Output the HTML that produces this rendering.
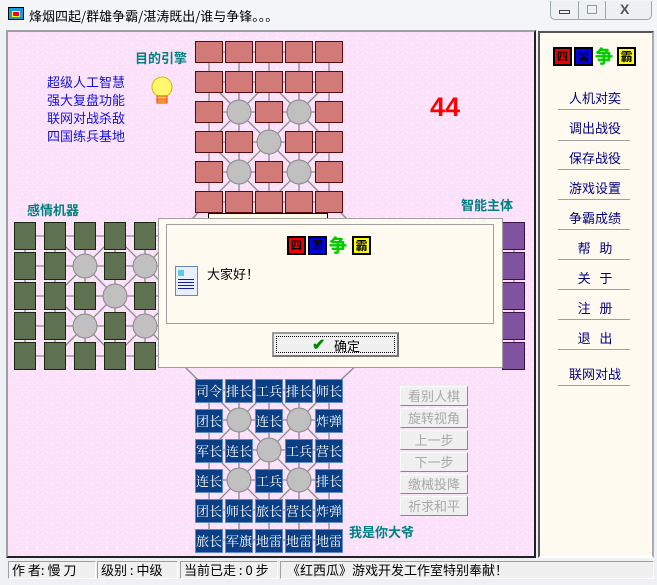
<!DOCTYPE html>
<html><head><meta charset="utf-8"><style>
*{margin:0;padding:0;box-sizing:border-box}
body{width:657px;height:585px;overflow:hidden;background:#eef1f5;font-family:"Liberation Sans","Noto Sans CJK SC",sans-serif;position:relative}
.a{position:absolute}
.cn{font-family:"Noto Sans CJK SC","WenQuanYi Zen Hei",sans-serif}
.rb{color:#000080;font-size:13px;width:112px;text-align:center}
.ln{height:1px;background:#a0a0a0;width:72px;left:558px}
.gb{left:400px;width:68px;height:20px;background:#f0f0f0;border:1px solid #fff;border-right-color:#888;border-bottom-color:#888;color:#a8a8a8;font-size:13px;text-align:center;line-height:18px}
.st{top:561px;height:18px;border:1px solid #a0a0a0;border-right-color:#fff;border-bottom-color:#fff;font-size:13px;line-height:16px;padding-left:3px;color:#000}
</style></head><body>
<div class="a" style="left:0;top:0;width:657px;height:30px;background:#f3f5f8"></div>
<div class="a" style="left:8px;top:7px;width:16px;height:13px;background:#1a9bd6;border:1px solid #000"><div class="a" style="left:3px;top:3px;width:8px;height:6px;background:#e03;border:1px solid #ff0"></div></div>
<div class="a cn" style="left:29px;top:6px;font-size:13px;color:#000">烽烟四起/群雄争霸/湛涛既出/谁与争锋。。。</div>
<div class="a" style="left:550px;top:1px;width:102px;height:19px;border:1px solid #9aa;border-top:none;border-radius:0 0 5px 5px;background:#eef1f4"></div>
<div class="a" style="left:578px;top:1px;width:1px;height:19px;background:#9aa"></div>
<div class="a" style="left:605px;top:1px;width:1px;height:19px;background:#9aa"></div>
<div class="a" style="left:559px;top:10px;width:11px;height:4px;border:1px solid #444"></div>
<div class="a" style="left:587px;top:5px;width:10px;height:9px;border:1px solid #999"></div>
<div class="a" style="left:620px;top:1px;font-size:14px;color:#555;font-weight:bold">X</div>
<div class="a" style="left:6px;top:30px;width:530px;height:528px;border:2px solid #a0a0a0;border-right:2px solid #222;border-bottom:2px solid #222;background:#fbe2fa"></div>
<svg class="a" style="left:0;top:0" width="540" height="560">
<defs><pattern id="p" width="10" height="10" patternUnits="userSpaceOnUse"><rect x="2" y="3" width="1" height="1" fill="#fff"/><rect x="6" y="7" width="2" height="1" fill="#fff"/><rect x="7" y="2" width="1" height="1" fill="#fff"/></pattern></defs>
<rect x="10" y="34" width="524" height="522" fill="url(#p)"/>
<g stroke="#888" stroke-width="1.3" fill="none">
<path d="M209 52V202M239 52V202M269 52V202M299 52V202M329 52V202M209 52H329M209 82H329M209 112H329M209 142H329M209 172H329M209 202H329M209 82L329 202M329 82L209 202M209 142L269 82L329 142L269 202Z"/>
<path d="M208 202L180 232M330 202L360 232"/>
<path d="M209 390V540M239 390V540M269 390V540M299 390V540M329 390V540M209 390H329M209 420H329M209 450H329M209 480H329M209 510H329M209 540H329M209 390L329 510M329 390L209 510M209 450L269 390L329 450L269 510Z"/>
<path d="M208 390L180 362M330 390L360 362"/>
<path d="M25 236H175M25 266H175M25 296H175M25 326H175M25 356H175M25 236V356M55 236V356M85 236V356M115 236V356M145 236V356M55 236L175 356M55 356L175 236M55 296L115 236L175 296L115 356Z"/>
<path d="M514 236V356"/>
</g>
<g fill="#c0c0c0" stroke="#888"><circle cx="239" cy="112" r="12"/><circle cx="299" cy="112" r="12"/><circle cx="269" cy="142" r="12"/><circle cx="239" cy="172" r="12"/><circle cx="299" cy="172" r="12"/>
<circle cx="239" cy="420" r="12"/><circle cx="299" cy="420" r="12"/><circle cx="269" cy="450" r="12"/><circle cx="239" cy="480" r="12"/><circle cx="299" cy="480" r="12"/>
<circle cx="85" cy="266" r="12"/><circle cx="145" cy="266" r="12"/><circle cx="115" cy="296" r="12"/><circle cx="85" cy="326" r="12"/><circle cx="145" cy="326" r="12"/></g>
<g fill="#d27a78" stroke="#5a0a0a">
<rect x="195.5" y="41.5" width="27" height="21"/><rect x="225.5" y="41.5" width="27" height="21"/><rect x="255.5" y="41.5" width="27" height="21"/><rect x="285.5" y="41.5" width="27" height="21"/><rect x="315.5" y="41.5" width="27" height="21"/>
<rect x="195.5" y="71.5" width="27" height="21"/><rect x="225.5" y="71.5" width="27" height="21"/><rect x="255.5" y="71.5" width="27" height="21"/><rect x="285.5" y="71.5" width="27" height="21"/><rect x="315.5" y="71.5" width="27" height="21"/>
<rect x="195.5" y="101.5" width="27" height="21"/><rect x="255.5" y="101.5" width="27" height="21"/><rect x="315.5" y="101.5" width="27" height="21"/>
<rect x="195.5" y="131.5" width="27" height="21"/><rect x="225.5" y="131.5" width="27" height="21"/><rect x="285.5" y="131.5" width="27" height="21"/><rect x="315.5" y="131.5" width="27" height="21"/>
<rect x="195.5" y="161.5" width="27" height="21"/><rect x="255.5" y="161.5" width="27" height="21"/><rect x="315.5" y="161.5" width="27" height="21"/>
<rect x="195.5" y="191.5" width="27" height="21"/><rect x="225.5" y="191.5" width="27" height="21"/><rect x="255.5" y="191.5" width="27" height="21"/><rect x="285.5" y="191.5" width="27" height="21"/><rect x="315.5" y="191.5" width="27" height="21"/>
</g>
<g fill="#5e7150" stroke="#1a2a10">
<rect x="14.5" y="222.5" width="21" height="27"/><rect x="44.5" y="222.5" width="21" height="27"/><rect x="74.5" y="222.5" width="21" height="27"/><rect x="104.5" y="222.5" width="21" height="27"/><rect x="134.5" y="222.5" width="21" height="27"/>
<rect x="14.5" y="252.5" width="21" height="27"/><rect x="44.5" y="252.5" width="21" height="27"/><rect x="104.5" y="252.5" width="21" height="27"/>
<rect x="14.5" y="282.5" width="21" height="27"/><rect x="44.5" y="282.5" width="21" height="27"/><rect x="74.5" y="282.5" width="21" height="27"/><rect x="134.5" y="282.5" width="21" height="27"/>
<rect x="14.5" y="312.5" width="21" height="27"/><rect x="44.5" y="312.5" width="21" height="27"/><rect x="104.5" y="312.5" width="21" height="27"/>
<rect x="14.5" y="342.5" width="21" height="27"/><rect x="44.5" y="342.5" width="21" height="27"/><rect x="74.5" y="342.5" width="21" height="27"/><rect x="104.5" y="342.5" width="21" height="27"/><rect x="134.5" y="342.5" width="21" height="27"/>
</g>
<g fill="#7f53a0" stroke="#3a1050">
<rect x="502.5" y="222.5" width="22" height="27"/><rect x="502.5" y="252.5" width="22" height="27"/><rect x="502.5" y="282.5" width="22" height="27"/><rect x="502.5" y="312.5" width="22" height="27"/><rect x="502.5" y="342.5" width="22" height="27"/>
</g>
<g fill="#0a3f86" stroke="#5f8acb">
<rect x="195.5" y="379.5" width="27" height="23"/><rect x="225.5" y="379.5" width="27" height="23"/><rect x="255.5" y="379.5" width="27" height="23"/><rect x="285.5" y="379.5" width="27" height="23"/><rect x="315.5" y="379.5" width="27" height="23"/>
<rect x="195.5" y="409.5" width="27" height="23"/><rect x="255.5" y="409.5" width="27" height="23"/><rect x="315.5" y="409.5" width="27" height="23"/>
<rect x="195.5" y="439.5" width="27" height="23"/><rect x="225.5" y="439.5" width="27" height="23"/><rect x="285.5" y="439.5" width="27" height="23"/><rect x="315.5" y="439.5" width="27" height="23"/>
<rect x="195.5" y="469.5" width="27" height="23"/><rect x="255.5" y="469.5" width="27" height="23"/><rect x="315.5" y="469.5" width="27" height="23"/>
<rect x="195.5" y="499.5" width="27" height="23"/><rect x="225.5" y="499.5" width="27" height="23"/><rect x="255.5" y="499.5" width="27" height="23"/><rect x="285.5" y="499.5" width="27" height="23"/><rect x="315.5" y="499.5" width="27" height="23"/>
<rect x="195.5" y="529.5" width="27" height="23"/><rect x="225.5" y="529.5" width="27" height="23"/><rect x="255.5" y="529.5" width="27" height="23"/><rect x="285.5" y="529.5" width="27" height="23"/><rect x="315.5" y="529.5" width="27" height="23"/>
</g>
<g fill="#fff" font-size="13" font-family="Noto Serif CJK SC,Noto Sans CJK SC,serif" text-anchor="middle">
<text x="209" y="396">司令</text><text x="239" y="396">排长</text><text x="269" y="396">工兵</text><text x="299" y="396">排长</text><text x="329" y="396">师长</text>
<text x="209" y="426">团长</text><text x="269" y="426">连长</text><text x="329" y="426">炸弹</text>
<text x="209" y="456">军长</text><text x="239" y="456">连长</text><text x="299" y="456">工兵</text><text x="329" y="456">营长</text>
<text x="209" y="486">连长</text><text x="269" y="486">工兵</text><text x="329" y="486">排长</text>
<text x="209" y="516">团长</text><text x="239" y="516">师长</text><text x="269" y="516">旅长</text><text x="299" y="516">营长</text><text x="329" y="516">炸弹</text>
<text x="209" y="546">旅长</text><text x="239" y="546">军旗</text><text x="269" y="546">地雷</text><text x="299" y="546">地雷</text><text x="329" y="546">地雷</text>
</g>
<circle cx="162" cy="87" r="10" fill="#fff86a" stroke="#d8b400"/>
<rect x="157" y="96" width="10" height="7" fill="#ffe040" stroke="#e04020" stroke-width="1"/>
<path d="M157 99H167M157 101H167" stroke="#e04020"/>
<text x="445" y="116" fill="#f00" font-size="27" font-weight="bold" font-family="Liberation Sans" text-anchor="middle">44</text>
</svg>
<div class="a cn" style="left:135px;top:48px;font-size:13px;font-weight:bold;color:#008080">目的引擎</div>
<div class="a cn" style="left:47px;top:73px;font-size:13px;line-height:18px;color:#1010e0">超级人工智慧<br>强大复盘功能<br>联网对战杀敌<br>四国练兵基地</div>
<div class="a cn" style="left:27px;top:200px;font-size:13px;font-weight:bold;color:#008080">感情机器</div>
<div class="a cn" style="left:461px;top:195px;font-size:13px;font-weight:bold;color:#008080">智能主体</div>
<div class="a cn" style="left:349px;top:522px;font-size:13px;font-weight:bold;color:#008080">我是你大爷</div>
<div class="a" style="left:208px;top:213px;width:120px;height:6px;background:#fffbe8;border:1px solid #000;border-bottom:none"></div>
<div class="a gb cn" style="top:386px">看别人棋</div>
<div class="a gb cn" style="top:408px">旋转视角</div>
<div class="a gb cn" style="top:430px">上一步</div>
<div class="a gb cn" style="top:452px">下一步</div>
<div class="a gb cn" style="top:474px">缴械投降</div>
<div class="a gb cn" style="top:496px">祈求和平</div>
<div class="a" style="left:158px;top:218px;width:345px;height:150px;background:#fffaf0;border:1px solid #a0a0a0"></div>
<div class="a" style="left:166px;top:224px;width:328px;height:100px;border:1px solid #a0a0a0"></div>
<div class="a" style="left:287px;top:236px;display:flex;gap:2px">
<div style="width:19px;height:19px;background:#e00;border:2px solid #000;color:#000;font-size:11px;text-align:center;line-height:15px;font-weight:bold" class="cn">四</div>
<div style="width:19px;height:19px;background:#00e;border:2px solid #000;color:#000;font-size:11px;text-align:center;line-height:15px;font-weight:bold" class="cn">国</div>
<div style="width:21px;height:19px;color:#0c0;font-size:18px;line-height:19px;font-weight:900" class="cn">争</div>
<div style="width:19px;height:19px;background:#ff0;border:2px solid #000;color:#000;font-size:12px;text-align:center;line-height:15px;font-weight:bold" class="cn">霸</div>
</div>
<div class="a" style="left:175px;top:266px;width:23px;height:30px;background:#e8f0ff;border:1px solid #6a84b4">
<div class="a" style="left:2px;top:3px;width:6px;height:6px;background:#5bc8f0"></div>
<div class="a" style="left:2px;top:12px;width:16px;height:10px;background:repeating-linear-gradient(#1a1aa0 0 1px,transparent 1px 3px)"></div></div>
<div class="a cn" style="left:207px;top:264px;font-size:13px;color:#000">大家好！</div>
<div class="a" style="left:272px;top:332px;width:127px;height:25px;background:#f0f0f0;border:2px solid #777;border-top-color:#999;border-left-color:#999"><div class="a" style="left:2px;top:2px;width:119px;height:17px;border:1px dotted #000"></div></div>
<div class="a" style="left:312px;top:335px;color:#080;font-size:16px;font-weight:bold">✔</div>
<div class="a cn" style="left:334px;top:336px;font-size:13px;color:#000">确定</div>
<div class="a" style="left:538px;top:31px;width:116px;height:527px;background:#fffaf0;border:2px solid #555;border-right-color:#aaa;border-bottom-color:#fff"></div>
<div class="a" style="left:553px;top:47px;display:flex;gap:2px">
<div style="width:19px;height:19px;background:#e00;border:2px solid #000;font-size:11px;text-align:center;line-height:15px;font-weight:bold" class="cn">四</div>
<div style="width:19px;height:19px;background:#00e;border:2px solid #000;font-size:11px;text-align:center;line-height:15px;font-weight:bold" class="cn">国</div>
<div style="width:20px;height:19px;color:#0c0;font-size:18px;line-height:19px;font-weight:900" class="cn">争</div>
<div style="width:19px;height:19px;background:#ff0;border:2px solid #000;font-size:12px;text-align:center;line-height:15px;font-weight:bold" class="cn">霸</div>
</div>
<div class="a rb cn" style="left:539px;top:88px">人机对奕</div><div class="a ln" style="top:109px"></div>
<div class="a rb cn" style="left:539px;top:118px">调出战役</div><div class="a ln" style="top:140px"></div>
<div class="a rb cn" style="left:539px;top:148px">保存战役</div><div class="a ln" style="top:169px"></div>
<div class="a rb cn" style="left:539px;top:178px">游戏设置</div><div class="a ln" style="top:199px"></div>
<div class="a rb cn" style="left:539px;top:208px">争霸成绩</div><div class="a ln" style="top:229px"></div>
<div class="a rb cn" style="left:539px;top:238px">帮&nbsp;&nbsp;&nbsp;助</div><div class="a ln" style="top:259px"></div>
<div class="a rb cn" style="left:539px;top:268px">关&nbsp;&nbsp;&nbsp;于</div><div class="a ln" style="top:289px"></div>
<div class="a rb cn" style="left:539px;top:298px">注&nbsp;&nbsp;&nbsp;册</div><div class="a ln" style="top:319px"></div>
<div class="a rb cn" style="left:539px;top:328px">退&nbsp;&nbsp;&nbsp;出</div><div class="a ln" style="top:349px"></div>
<div class="a rb cn" style="left:539px;top:364px">联网对战</div><div class="a ln" style="top:385px"></div>
<div class="a" style="left:6px;top:559px;width:650px;height:22px;background:#f0f0f0"></div>
<div class="a st cn" style="left:8px;width:88px">作 者: 慢 刀</div>
<div class="a st cn" style="left:97px;width:81px">级别 : 中级</div>
<div class="a st cn" style="left:180px;width:98px">当前已走 : 0 步</div>
<div class="a st cn" style="left:280px;width:374px;padding-left:6px">《红西瓜》游戏开发工作室特别奉献！</div>
</body></html>
